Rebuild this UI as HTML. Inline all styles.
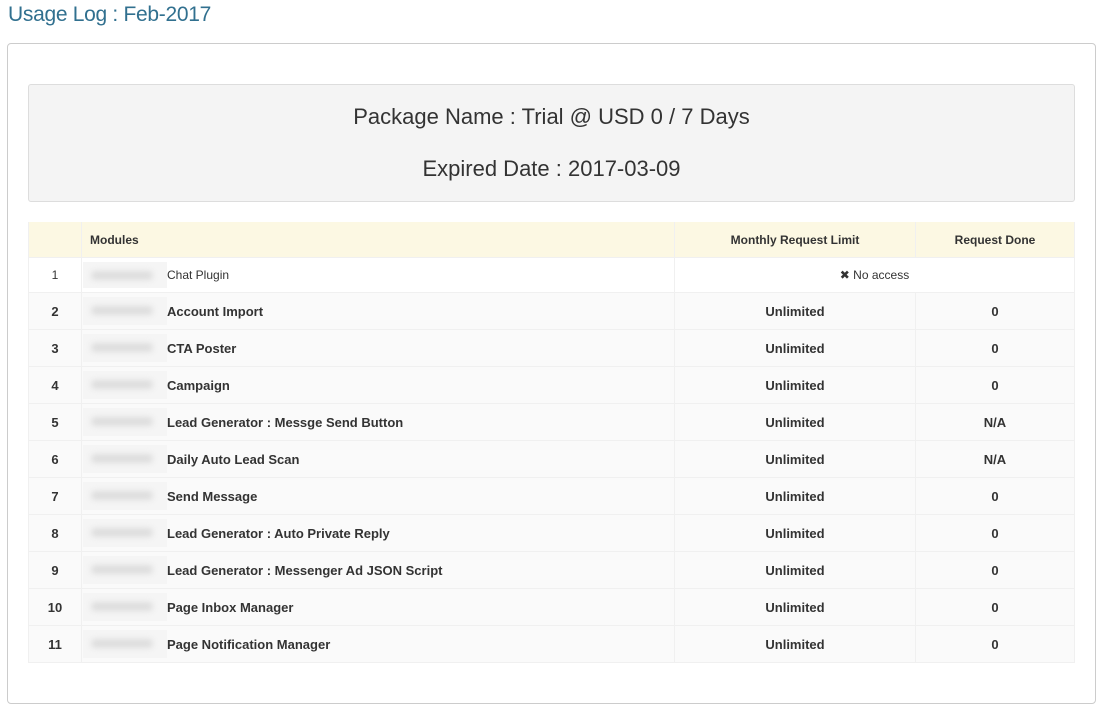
<!DOCTYPE html>
<html><head><style>
body{margin:0;background:#fff;font-family:"Liberation Sans",sans-serif;color:#333;width:1103px;height:714px;overflow:hidden;position:relative}
h1{position:absolute;left:8px;top:3px;margin:0;font-size:21px;font-weight:normal;color:#31708f;letter-spacing:-0.3px}
.box{position:absolute;left:7px;top:43px;width:1087px;height:659px;border:1px solid #ccc;border-radius:4px}
.pk{position:absolute;left:28px;top:84px;width:1045px;height:116px;background:#f4f4f4;border:1px solid #ddd;border-radius:3px;text-align:center;font-size:22px;color:#333}
.pk div{position:absolute;left:0;right:0}
table{position:absolute;left:28px;top:222px;width:1047px;border-collapse:collapse;font-size:13px}
td,th{border:1px solid #f0f0f0;padding:0;text-align:center}
th{background:#fcf8e3;height:35px;font-size:12px;color:#333;border-top:0}
th.m{text-align:left;padding-left:8px}
tr.r td{height:36px;font-weight:bold;background:#fafafa}
tr.f td{height:34px;font-size:12px;background:#fff}
td.m{text-align:left;position:relative;padding-left:85px}
.bl{position:absolute;left:1px;top:4px;width:84px;bottom:4px;background:#f5f5f5}
.bl:after{content:"";position:absolute;left:8px;top:9px;width:62px;height:9px;background:#ddd;border-radius:5px;filter:blur(3px)}
</style></head><body>
<h1>Usage Log : Feb-2017</h1>
<div class="box"></div>
<div class="pk"><div style="top:19px">Package Name : Trial @ USD 0 / 7 Days</div><div style="top:71px">Expired Date : 2017-03-09</div></div>
<table>
<tr><th style="width:52px"></th><th class="m" style="width:584px">Modules</th><th style="width:240px">Monthly Request Limit</th><th>Request Done</th></tr>
<tr class="f"><td>1</td><td class="m"><span class="bl"></span>Chat Plugin</td><td colspan="2">✖ No access</td></tr>
<tr class="r"><td>2</td><td class="m"><span class="bl"></span>Account Import</td><td>Unlimited</td><td>0</td></tr>
<tr class="r"><td>3</td><td class="m"><span class="bl"></span>CTA Poster</td><td>Unlimited</td><td>0</td></tr>
<tr class="r"><td>4</td><td class="m"><span class="bl"></span>Campaign</td><td>Unlimited</td><td>0</td></tr>
<tr class="r"><td>5</td><td class="m"><span class="bl"></span>Lead Generator : Messge Send Button</td><td>Unlimited</td><td>N/A</td></tr>
<tr class="r"><td>6</td><td class="m"><span class="bl"></span>Daily Auto Lead Scan</td><td>Unlimited</td><td>N/A</td></tr>
<tr class="r"><td>7</td><td class="m"><span class="bl"></span>Send Message</td><td>Unlimited</td><td>0</td></tr>
<tr class="r"><td>8</td><td class="m"><span class="bl"></span>Lead Generator : Auto Private Reply</td><td>Unlimited</td><td>0</td></tr>
<tr class="r"><td>9</td><td class="m"><span class="bl"></span>Lead Generator : Messenger Ad JSON Script</td><td>Unlimited</td><td>0</td></tr>
<tr class="r"><td>10</td><td class="m"><span class="bl"></span>Page Inbox Manager</td><td>Unlimited</td><td>0</td></tr>
<tr class="r"><td>11</td><td class="m"><span class="bl"></span>Page Notification Manager</td><td>Unlimited</td><td>0</td></tr>
</table>
</body></html>
